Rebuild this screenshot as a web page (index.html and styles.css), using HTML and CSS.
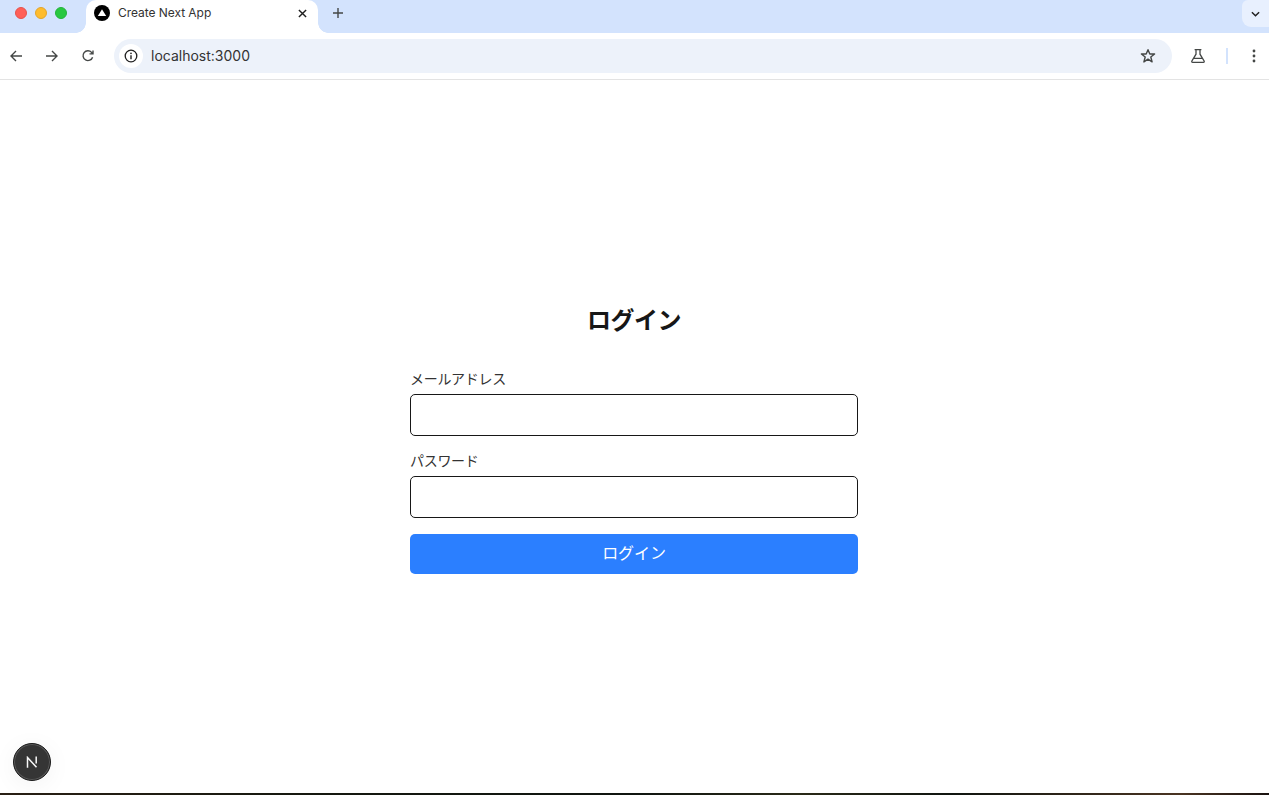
FILE: index.html
```html
<!DOCTYPE html>
<html lang="ja">
<head>
<meta charset="utf-8">
<title>Create Next App</title>
<link rel="stylesheet" href="styles.css">
</head>
<body>
<header class="chrome">
  <div class="tabstrip">
    <div class="lights">
      <span class="light red"></span>
      <span class="light yellow"></span>
      <span class="light green"></span>
    </div>
    <div class="tab">
      <svg class="favicon" viewBox="0 0 16 16"><circle cx="8" cy="8" r="8" fill="#000"/><path d="M8 4.2 12.2 11H3.8Z" fill="#fff"/></svg>
      <span class="tab-title">Create Next App</span>
      <svg class="tab-close" viewBox="0 0 10 10"><path d="M1 1 9 9M9 1 1 9" stroke="#1f1f1f" stroke-width="1.6" fill="none"/></svg>
    </div>
    <svg class="new-tab" viewBox="0 0 12 12"><path d="M6 1V11M1 6H11" stroke="#444746" stroke-width="1.4" fill="none"/></svg>
    <div class="tab-search">
      <svg viewBox="0 0 10 6" class="chev"><path d="M1 1 5 5 9 1" stroke="#1f1f1f" stroke-width="1.6" fill="none"/></svg>
    </div>
  </div>
  <div class="toolbar">
    <div class="nav">
      <svg class="nav-icon" viewBox="0 0 14 14"><path d="M13 7H2M7 2 2 7 7 12" stroke="#444746" stroke-width="1.4" fill="none"/></svg>
      <svg class="nav-icon" viewBox="0 0 14 14"><path d="M1 7H12M7 2 12 7 7 12" stroke="#444746" stroke-width="1.4" fill="none"/></svg>
      <svg class="nav-icon" viewBox="0 0 14 14"><path d="M11.6 8.2A4.9 4.9 0 1 1 10.6 3.4L12 4.8M12 1.4V4.9H8.5" stroke="#444746" stroke-width="1.4" fill="none"/></svg>
    </div>
    <div class="omnibox">
      <span class="site-info">
        <svg viewBox="0 0 14 14" class="info-icon"><circle cx="7" cy="7" r="5.8" stroke="#1f1f1f" stroke-width="1.3" fill="none"/><path d="M7 6.2V10.2" stroke="#1f1f1f" stroke-width="1.4"/><circle cx="7" cy="4.3" r=".85" fill="#1f1f1f"/></svg>
      </span>
      <span class="url">localhost:3000</span>
      <svg class="star" viewBox="0 0 16 16"><path d="M8 1.7 9.8 6H14.6L10.8 9 12.1 13.9 8 11.2 3.9 13.9 5.2 9 1.4 6H6.2Z" stroke="#444746" stroke-width="1.4" stroke-linejoin="round" fill="none"/></svg>
    </div>
    <div class="actions">
      <svg class="flask" viewBox="0 0 14 14"><path d="M3.6 .7H10.4M5 .7V5.2L.9 12Q.4 13.3 1.6 13.3H12.4Q13.6 13.3 13.1 12L9 5.2V.7M3 9.4H11" stroke="#444746" stroke-width="1.3" fill="none"/></svg>
      <span class="sep"></span>
      <svg class="dots" viewBox="0 0 4 14"><circle cx="2" cy="2" r="1.4" fill="#444746"/><circle cx="2" cy="7" r="1.4" fill="#444746"/><circle cx="2" cy="12" r="1.4" fill="#444746"/></svg>
    </div>
  </div>
</header>

<main class="page">
  <form class="login">
    <h1 class="title">ログイン</h1>
    <div class="field">
      <label class="label" for="email">メールアドレス</label>
      <input class="input" id="email" type="email">
    </div>
    <div class="field">
      <label class="label" for="password">パスワード</label>
      <input class="input" id="password" type="password">
    </div>
    <button class="submit" type="button">ログイン</button>
  </form>
</main>

<div class="next-badge">
  <svg viewBox="0 0 16 16" class="next-n"><path d="M2 15.5V2L14 15M13.6 .5V10" stroke="#f8f8f8" stroke-width="2" fill="none"/></svg>
</div>
<div class="wallpaper"></div>
</body>
</html>
```
FILE: styles.css
```css
* { box-sizing: border-box; }
html, body { height: 100%; }
body {
  margin: 0;
  height: 795px;
  overflow: hidden;
  display: flex;
  flex-direction: column;
  background: #fff;
  color: #171717;
  font-family: Inter, "Noto Sans CJK JP", sans-serif;
}
.chrome { flex: none; }
.tabstrip {
  height: 33px;
  background: #d3e3fd;
  display: flex;
  align-items: flex-start;
  position: relative;
}
.lights { width: 86px; height: 26px; padding-left: 15px; display: flex; align-items: center; gap: 8px; }
.light { width: 12px; height: 12px; border-radius: 50%; }
.red { background: #ff5f57; border: 1px solid #e5534c; }
.yellow { background: #febc2e; border: 1px solid #e3a52a; }
.green { background: #28c840; border: 1px solid #24b33a; }
.tab {
  width: 232px;
  height: 33px;
  background: #fff;
  border-radius: 10px 10px 0 0;
  display: flex;
  align-items: center;
  padding: 0 11px 7px 8px;
  position: relative;
}
.tab::before, .tab::after {
  content: "";
  position: absolute;
  bottom: 0;
  width: 10px;
  height: 10px;
}
.tab::before { left: -10px; background: radial-gradient(circle at 0 0, transparent 9.5px, #fff 10px); }
.tab::after { right: -10px; background: radial-gradient(circle at 100% 0, transparent 9.5px, #fff 10px); }
.favicon { width: 16px; height: 16px; flex: none; }
.tab-title { margin-left: 8px; margin-bottom: 1px; flex: 1; font-size: 12px; color: #333; letter-spacing: -.05px; white-space: nowrap; }
.tab-close { width: 9px; height: 9px; flex: none; }
.new-tab { width: 12px; height: 12px; margin: 7px 0 0 14px; flex: none; }
.tab-search {
  margin-left: auto;
  width: 27px;
  height: 27px;
  background: #e8f0fe;
  border-radius: 6px 0 0 9px;
  display: flex;
  align-items: center;
  justify-content: center;
}
.chev { width: 9px; height: 6px; }
.toolbar {
  height: 47px;
  background: #fff;
  border-bottom: 1px solid #e3e3e3;
  display: flex;
  align-items: center;
  padding-bottom: 1px;
}
.nav { width: 114px; display: flex; align-items: center; padding-left: 9px; gap: 22px; flex: none; }
.nav-icon { width: 14px; height: 14px; flex: none; }
.omnibox {
  width: 1058px;
  height: 34px;
  flex: none;
  background: #edf2fa;
  border-radius: 17px;
  display: flex;
  align-items: center;
  padding: 0 16px 0 5px;
}
.site-info {
  width: 24px;
  height: 24px;
  border-radius: 50%;
  background: #fff;
  display: flex;
  align-items: center;
  justify-content: center;
  flex: none;
}
.info-icon { width: 14px; height: 14px; }
.url { margin-left: 8px; flex: 1; font-size: 14px; color: #333; }
.star { width: 16px; height: 16px; flex: none; }
.actions { flex: 1; display: flex; align-items: center; }
.flask { width: 14px; height: 14px; margin-left: 19px; flex: none; }
.sep { width: 2px; height: 16px; background: #d3e3fd; margin-left: 21px; flex: none; }
.dots { width: 4px; height: 14px; margin-left: 24px; flex: none; }

.page {
  flex: 1;
  display: flex;
  justify-content: center;
  padding: 225px 1px 0 0;
}
.login { width: 448px; display: flex; flex-direction: column; }
.title {
  margin: 0 0 33px;
  font-size: 24px;
  line-height: 32px;
  font-weight: 700;
  letter-spacing: -.5px;
  text-align: center;
  color: #171717;
}
.field { display: flex; flex-direction: column; margin-bottom: 16px; }
.label { font-size: 14px; line-height: 18px; letter-spacing: -.3px; color: #333; margin-bottom: 6px; }
.input {
  width: 100%;
  height: 42px;
  border: 1px solid #171717;
  border-radius: 5px;
  background: #fff;
  outline: none;
}
.submit {
  width: 100%;
  height: 40px;
  border: 0;
  border-radius: 5px;
  background: #2b7fff;
  color: #fff;
  font: inherit;
  font-size: 16px;
  letter-spacing: -.1px;
  padding: 0 0 4px;
}
.next-badge {
  position: absolute;
  left: 13px;
  top: 743px;
  width: 38px;
  height: 38px;
  border-radius: 50%;
  background: #353535;
  border: 1px solid #1c1c1c;
  box-shadow: 0 0 0 1px #5a5a5a inset, 0 4px 24px rgba(0, 0, 0, .05);
  display: flex;
  align-items: center;
  justify-content: center;
}
.next-n { width: 12px; height: 12px; }
.wallpaper {
  flex: none;
  height: 2px;
  background: linear-gradient(90deg, #2a2015 0, #15180f 25%, #101510 50%, #2a2a18 63%, #101510 75%, #4a3422 93%, #1a1210 100%);
}
```
